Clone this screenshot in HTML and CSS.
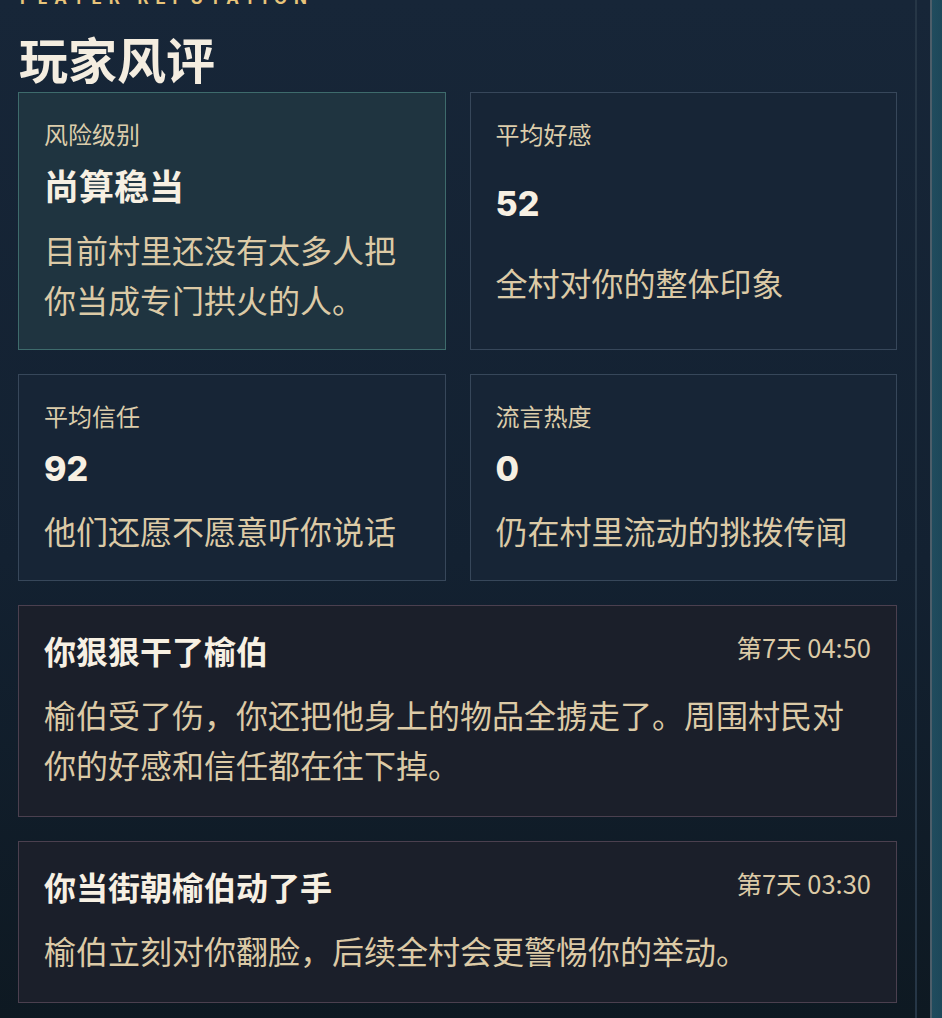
FILE: index.html
```html
<!DOCTYPE html>
<html lang="zh-CN">
<head>
<meta charset="utf-8">
<title>玩家风评</title>
<link rel="stylesheet" href="styles.css">
</head>
<body>
<div class="stage">
  <aside class="drawer">
    <div class="scroll">
      <section class="panel">
        <p class="eyebrow">Player Reputation</p>
        <h1 class="title">玩家风评</h1>
        <div class="stats">
          <div class="stat stat-risk">
            <div class="stat-label">风险级别</div>
            <div class="stat-value stat-value-text">尚算稳当</div>
            <div class="stat-desc">目前村里还没有太多人把你当成专门拱火的人。</div>
          </div>
          <div class="stat">
            <div class="stat-label">平均好感</div>
            <div class="stat-value">52</div>
            <div class="stat-desc">全村对你的整体印象</div>
          </div>
          <div class="stat">
            <div class="stat-label">平均信任</div>
            <div class="stat-value">92</div>
            <div class="stat-desc">他们还愿不愿意听你说话</div>
          </div>
          <div class="stat">
            <div class="stat-label">流言热度</div>
            <div class="stat-value">0</div>
            <div class="stat-desc">仍在村里流动的挑拨传闻</div>
          </div>
        </div>
        <div class="events">
          <article class="event">
            <header class="event-head">
              <h2 class="event-title">你狠狠干了榆伯</h2>
              <span class="event-time">第7天 04:50</span>
            </header>
            <p class="event-body">榆伯受了伤，你还把他身上的物品全掳走了。周围村民对你的好感和信任都在往下掉。</p>
          </article>
          <article class="event">
            <header class="event-head">
              <h2 class="event-title">你当街朝榆伯动了手</h2>
              <span class="event-time">第7天 03:30</span>
            </header>
            <p class="event-body">榆伯立刻对你翻脸，后续全村会更警惕你的举动。</p>
          </article>
        </div>
      </section>
    </div>
  </aside>
  <div class="backdrop"></div>
</div>
</body>
</html>
```

FILE: styles.css
```css
* { box-sizing: border-box; }

html, body {
  margin: 0;
  padding: 0;
  height: 100%;
  overflow: hidden;
}

html {
  background: #1f4b5d;
}

body {
  font-family: "Noto Sans CJK SC", "Noto Sans", "Inter", sans-serif;
  background: #1f4b5d;
}

.stage {
  display: flex;
  height: 1018px;
}

.drawer {
  width: 932px;
  flex: none;
  height: 100%;
  background: linear-gradient(180deg, #172638 0%, #132131 55%, #0e1922 100%);
  border-right: 2px solid #4d5e6a;
}

.backdrop {
  flex: 1;
  min-width: 10px;
  background: linear-gradient(90deg, #204c5e, #1d4759);
}

.scroll {
  width: 917px;
  height: 100%;
  border-right: 2px solid #263646;
  overflow: hidden;
}

.panel {
  padding: 0 18px 0 18px;
}

.eyebrow {
  margin: -12px 0 21px 2px;
  font-family: "Inter", "Noto Sans", sans-serif;
  font-size: 17px;
  line-height: 20px;
  font-weight: 700;
  letter-spacing: 6.8px;
  text-transform: uppercase;
  color: #e8c47a;
  white-space: nowrap;
}

.title {
  margin: 0 0 6px 1px;
  font-size: 49px;
  line-height: 57px;
  font-weight: 700;
  color: #f4ede0;
}

.stats {
  display: grid;
  grid-template-columns: 1fr 1fr;
  gap: 24px;
}

.stat {
  display: grid;
  grid-template-rows: auto auto auto;
  row-gap: 13px;
  padding: 24px 25px 25px 25px;
  background: #172536;
  border: 1px solid #37475a;
}

.stat-risk {
  background: #1f3440;
  border-color: #3e6b6c;
}

.stat-label {
  font-size: 24px;
  line-height: 34px;
  color: #dccdab;
}

.stat-value {
  font-family: "Inter", "Noto Sans", sans-serif;
  font-size: 34px;
  line-height: 46px;
  font-weight: 800;
  color: #f7f0e3;
}

.stat-value-text {
  font-family: "Noto Sans CJK SC", sans-serif;
  font-size: 35px;
  font-weight: 700;
  line-height: 50px;
  margin-top: -4px;
  margin-bottom: 1px;
}

.stat-desc {
  font-size: 32px;
  line-height: 50px;
  color: #dccaa6;
}

.events {
  display: flex;
  flex-direction: column;
  gap: 24px;
  margin-top: 24px;
}

.event {
  padding: 23px 25px 27px 25px;
  background: #1b1f2a;
  border: 1px solid #4b404f;
}

.event-head {
  display: flex;
  justify-content: space-between;
  align-items: flex-start;
  gap: 16px;
}

.event-title {
  margin: 0;
  font-size: 32px;
  line-height: 42px;
  font-weight: 700;
  color: #f7f0e3;
}

.event-time {
  flex: none;
  font-size: 25.5px;
  line-height: 36px;
  color: #dccaa6;
}

.event-body {
  margin: 18px 0 0 0;
  font-size: 32px;
  line-height: 50px;
  color: #dccaa6;
}
```
